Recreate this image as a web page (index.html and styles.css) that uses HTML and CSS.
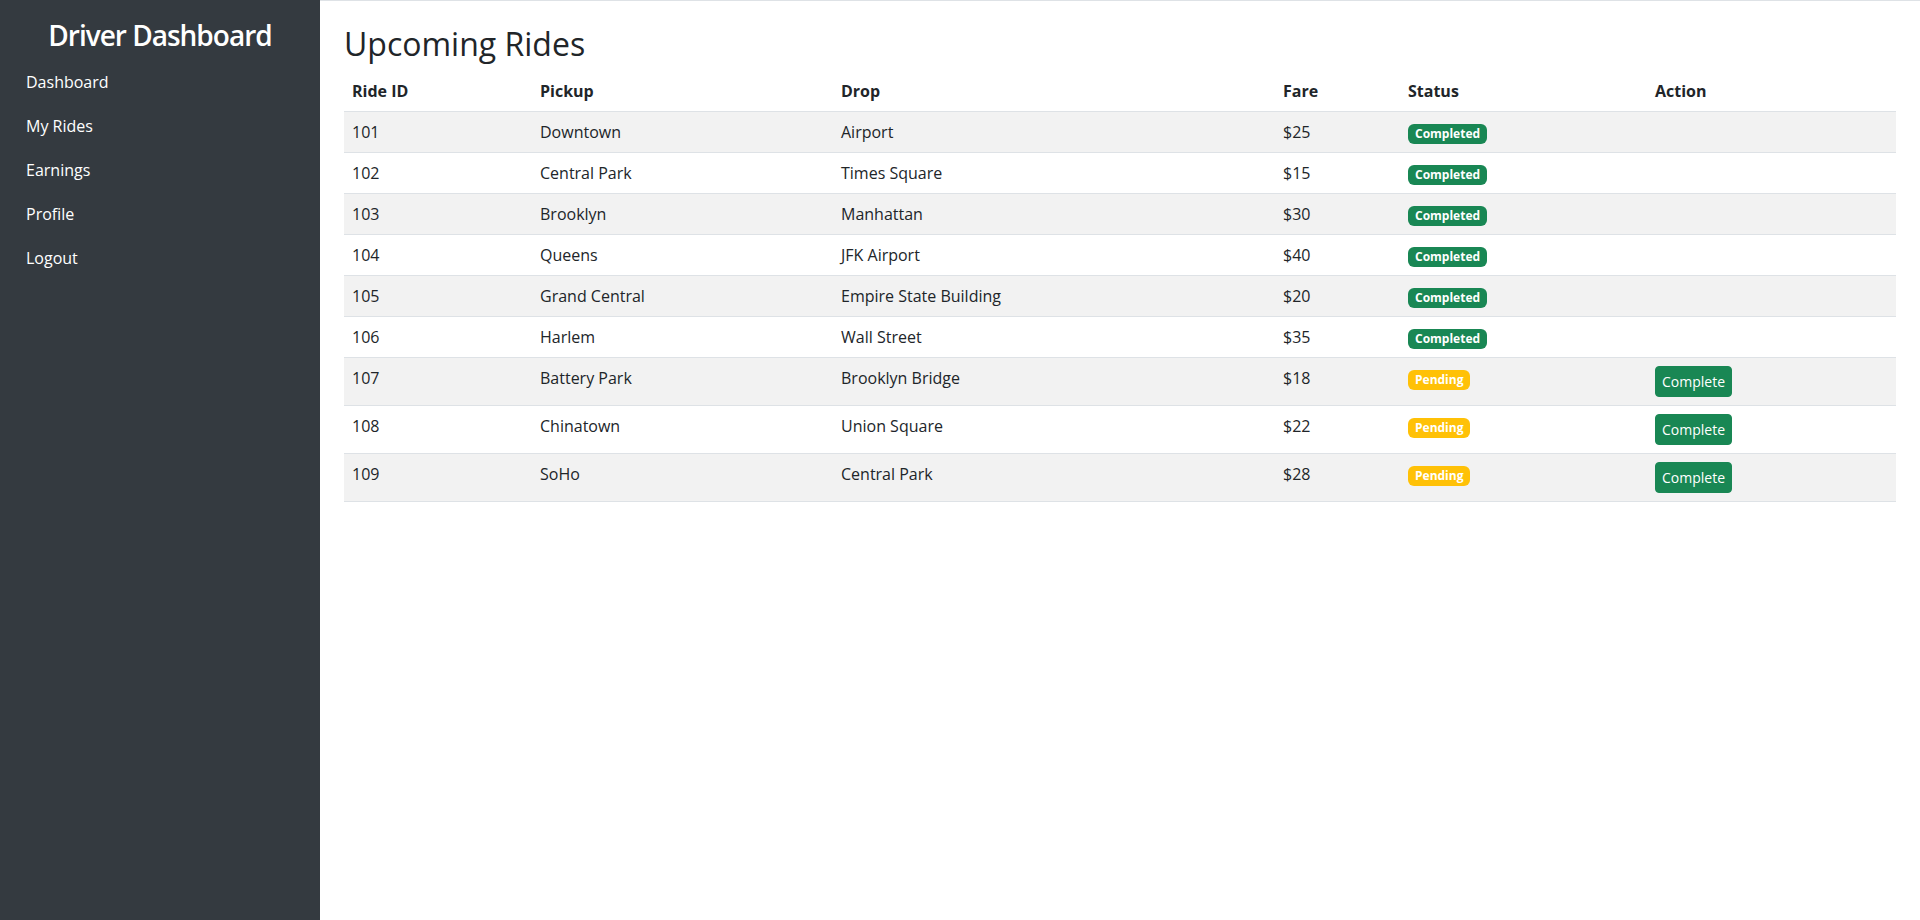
FILE: index.html
```html
<!DOCTYPE html>
<html lang="en">
<head>
<meta charset="utf-8">
<title>Driver Dashboard</title>
<link rel="stylesheet" href="styles.css">
</head>
<body>
<div class="layout">
  <aside class="sidebar">
    <h3 class="brand">Driver Dashboard</h3>
    <ul class="nav">
      <li><a class="nav-link" href="#">Dashboard</a></li>
      <li><a class="nav-link" href="#">My Rides</a></li>
      <li><a class="nav-link" href="#">Earnings</a></li>
      <li><a class="nav-link" href="#">Profile</a></li>
      <li><a class="nav-link" href="#">Logout</a></li>
    </ul>
  </aside>
  <main class="main">
    <h2 class="page-title">Upcoming Rides</h2>
    <table class="rides">
      <colgroup>
        <col class="c-id"><col class="c-pickup"><col class="c-drop"><col class="c-fare"><col class="c-status"><col class="c-action">
      </colgroup>
      <thead>
        <tr><th>Ride ID</th><th>Pickup</th><th>Drop</th><th>Fare</th><th>Status</th><th>Action</th></tr>
      </thead>
      <tbody>
        <tr><td>101</td><td>Downtown</td><td>Airport</td><td>$25</td><td><span class="badge done">Completed</span></td><td></td></tr>
        <tr><td>102</td><td>Central Park</td><td>Times Square</td><td>$15</td><td><span class="badge done">Completed</span></td><td></td></tr>
        <tr><td>103</td><td>Brooklyn</td><td>Manhattan</td><td>$30</td><td><span class="badge done">Completed</span></td><td></td></tr>
        <tr><td>104</td><td>Queens</td><td>JFK Airport</td><td>$40</td><td><span class="badge done">Completed</span></td><td></td></tr>
        <tr><td>105</td><td>Grand Central</td><td>Empire State Building</td><td>$20</td><td><span class="badge done">Completed</span></td><td></td></tr>
        <tr><td>106</td><td>Harlem</td><td>Wall Street</td><td>$35</td><td><span class="badge done">Completed</span></td><td></td></tr>
        <tr><td>107</td><td>Battery Park</td><td>Brooklyn Bridge</td><td>$18</td><td><span class="badge pending">Pending</span></td><td><button class="btn">Complete</button></td></tr>
        <tr><td>108</td><td>Chinatown</td><td>Union Square</td><td>$22</td><td><span class="badge pending">Pending</span></td><td><button class="btn">Complete</button></td></tr>
        <tr><td>109</td><td>SoHo</td><td>Central Park</td><td>$28</td><td><span class="badge pending">Pending</span></td><td><button class="btn">Complete</button></td></tr>
      </tbody>
    </table>
  </main>
</div>
</body>
</html>
```
FILE: styles.css
```css
* { box-sizing: border-box; }

html, body {
  margin: 0;
  padding: 0;
  height: 100%;
}

body {
  font-family: "Open Sans", "Noto Sans", "Liberation Sans", sans-serif;
  font-size: 16px;
  line-height: 1.5;
  color: #212529;
  background: #fff;
}

.layout {
  display: flex;
  min-height: 100vh;
}

.sidebar {
  width: 320px;
  flex: 0 0 320px;
  background: #343a40;
  color: #fff;
  padding: 19px 16px 16px 16px;
}

.brand {
  margin: 0 0 7px 0;
  font-size: 28px;
  font-weight: 600;
  line-height: 1.2;
  letter-spacing: -1px;
  text-align: center;
  color: #fff;
}

.nav {
  list-style: none;
  margin: 0;
  padding: 0;
}

.nav-link {
  display: block;
  padding: 10px 10px;
  line-height: 24px;
  color: #fff;
  text-decoration: none;
}

.main {
  flex: 1 1 auto;
  padding: 24px 24px 24px 24px;
  border-top: 1px solid #dee2e6;
}

.page-title {
  margin: 0 0 8px 0;
  font-size: 32px;
  font-weight: 500;
  line-height: 1.2;
}

.rides {
  width: 100%;
  border-collapse: collapse;
  table-layout: fixed;
}

.c-id { width: 188px; }
.c-pickup { width: 301px; }
.c-drop { width: 442px; }
.c-fare { width: 125px; }
.c-status { width: 247px; }
.c-action { width: 249px; }

.rides th,
.rides td {
  padding: 8px;
  text-align: left;
  vertical-align: top;
  line-height: 24px;
  border-bottom: 1px solid #dee2e6;
}

.rides th {
  font-weight: 700;
}

.rides tbody tr:nth-child(odd) td {
  background: #f2f2f2;
}

.badge {
  display: inline-block;
  padding: 4px 7px;
  font-size: 12px;
  font-weight: 700;
  line-height: 1;
  color: #fff;
  border-radius: 6px;
  white-space: nowrap;
  vertical-align: baseline;
}

.badge.done { background: #198754; }
.badge.pending { background: #ffc107; }

.btn {
  display: inline-block;
  font-family: inherit;
  font-size: 14px;
  line-height: 21px;
  padding: 4px 6px;
  color: #fff;
  background: #198754;
  border: 1px solid #198754;
  border-radius: 4px;
  cursor: pointer;
}
```
